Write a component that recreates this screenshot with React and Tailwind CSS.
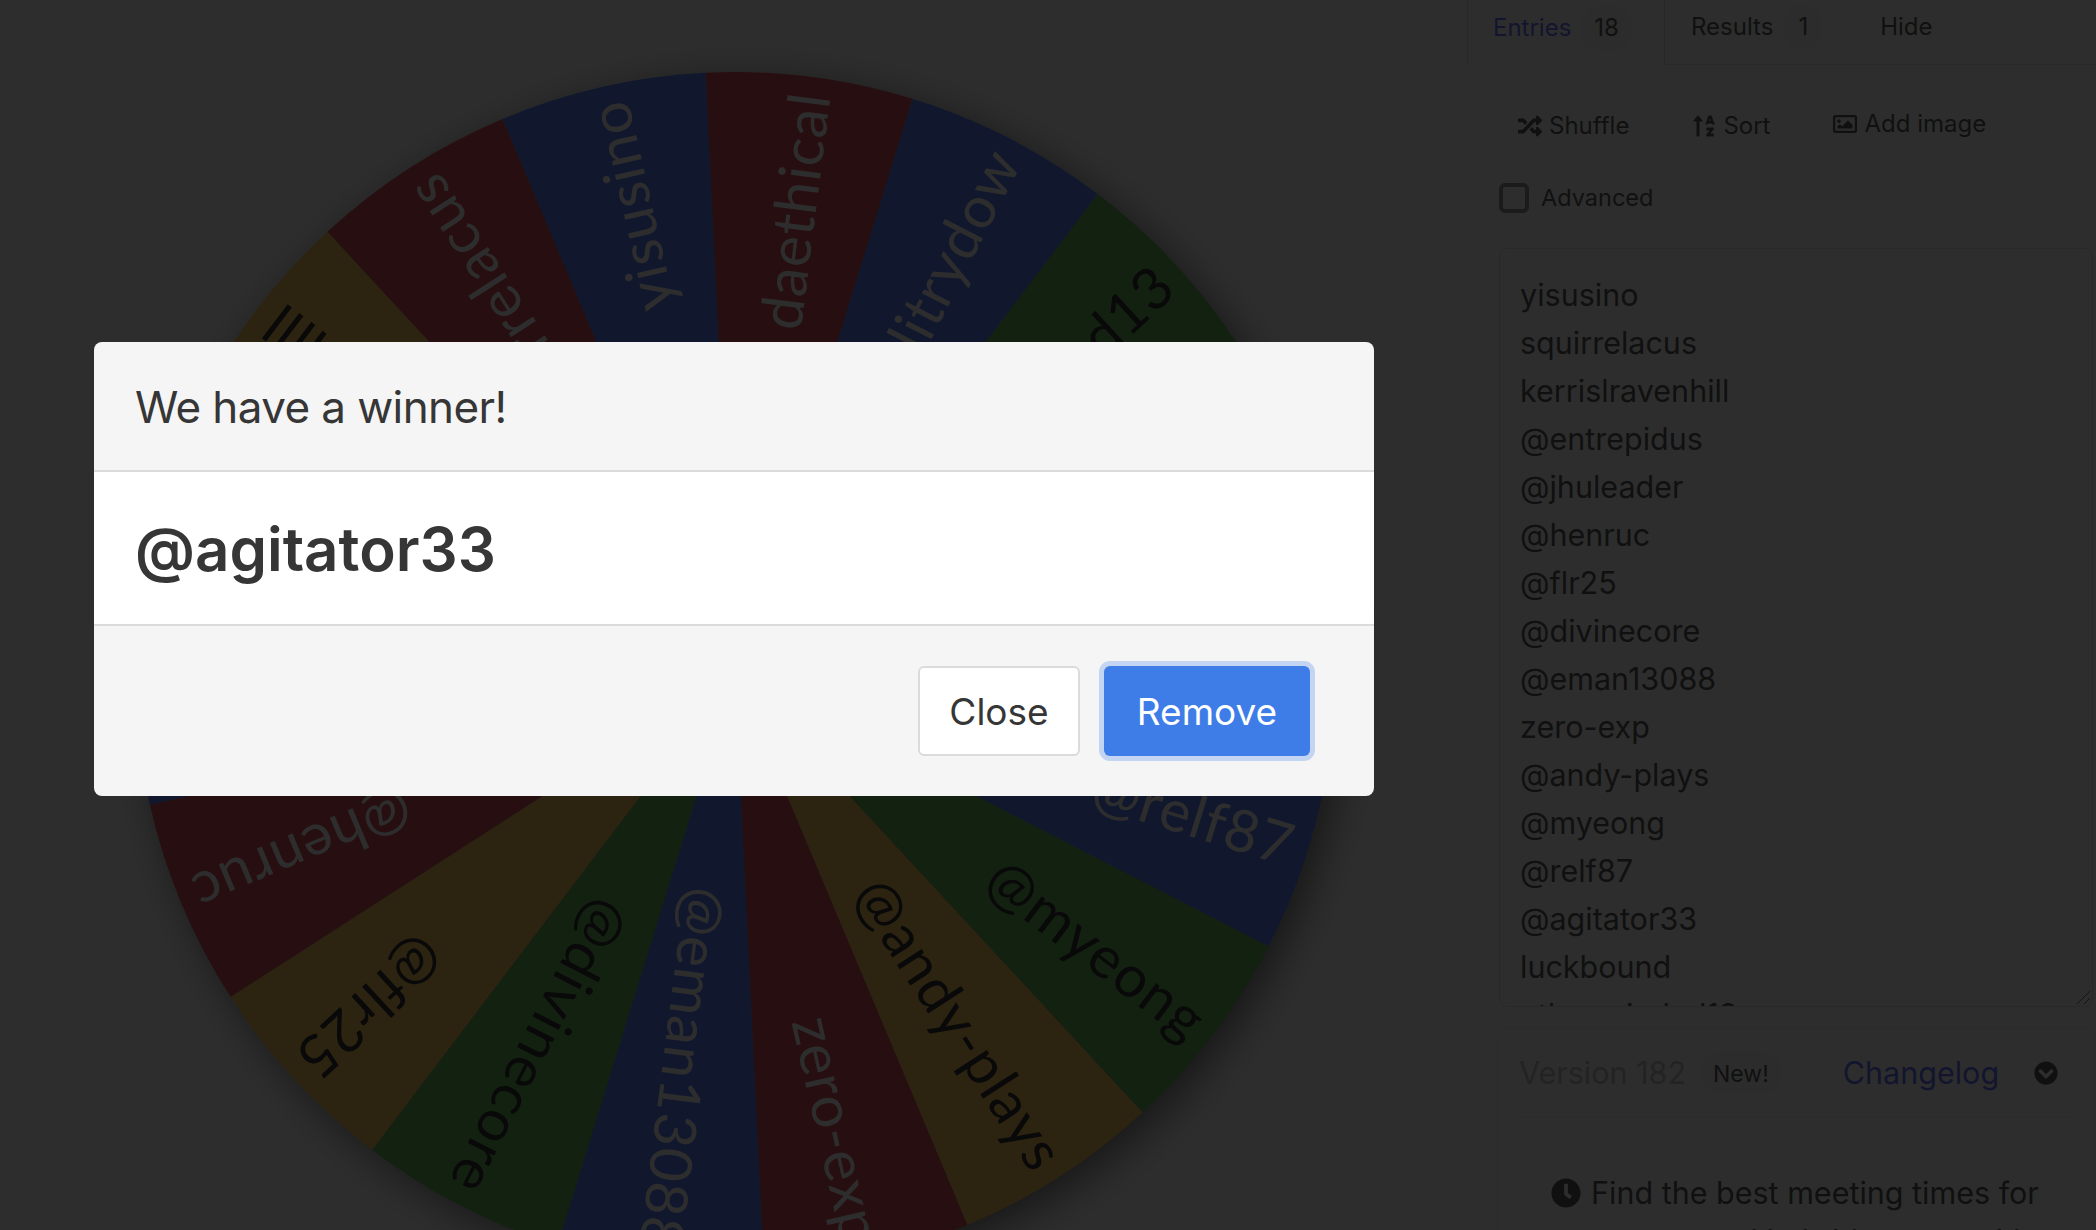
import React from 'react';
import {FaRandom, FaSortAlphaUp, FaRegImage, FaChevronCircleDown, FaClock} from "react-icons/fa";

const font = "font-['Inter',sans-serif]";

const entries = [
    "yisusino", "squirrelacus", "kerrislravenhill", "@entrepidus", "@jhuleader", "@henruc",
    "@flr25", "@divinecore", "@eman13088", "zero-exp", "@andy-plays", "@myeong",
    "@relf87", "@agitator33", "luckbound", "ethanwinded13", "@blitrydow", "daethical",
];
const colors = ["#3c6efd", "#d22735", "#f6bd3c", "#4aa73c"];
const visibleLines = entries.slice(0, 16);

const CX = 600;
const CY = 600;
const R = 600;

const point = deg => {
    const rad = (deg - 90) * Math.PI / 180;
    return [CX + R * Math.cos(rad), CY + R * Math.sin(rad)];
};

const Wheel = () => (
    <svg viewBox="0 0 1200 1200" className="w-[1200px] h-[1200px] shrink-0 overflow-visible drop-shadow-[10px_10px_20px_rgba(0,0,0,0.6)]">
        {entries.map((name, index) => {
            // list runs anticlockwise, first slice sits left of the top
            const start = -22.8 - index * 20;
            const end = start + 20;
            const [x1, y1] = point(start);
            const [x2, y2] = point(end);
            const color = colors[index % 4];
            const dark = index % 4 > 1;
            return (
                <g key={name}>
                    <path d={`M${CX} ${CY}L${x1} ${y1}A${R} ${R} 0 0 1 ${x2} ${y2}Z`} fill={color}/>
                    <text
                        x={CX + R - 16}
                        y={CY}
                        transform={`rotate(${(start + end) / 2 - 90} ${CX} ${CY})`}
                        textAnchor="end"
                        dominantBaseline="central"
                        fontFamily="Lato, sans-serif"
                        fontSize="58"
                        letterSpacing="1"
                        fill={dark ? "#000" : "#fff"}
                    >
                        {name}
                    </text>
                </g>
            );
        })}
    </svg>
);

const App = () => {
    return (
        <div className={`relative h-screen w-full overflow-hidden bg-white text-[#363636] ${font}`}>
            <div className="flex h-full">
                <div className="w-[1467px] shrink-0 pt-[72px] pl-[135px]">
                    <Wheel/>
                </div>
                <div className="flex-1 min-w-0">
                    <div className="flex h-[65px] text-[24px]">
                        <div className="flex h-full w-[198px] items-center border-x border-[#dbdbdb] pl-[25px] pb-[10px]">
                            <span className="text-[#4258ff]">Entries</span>
                            <span className="ml-[9px] rounded-full bg-[#f5f5f5] px-[14px] py-[5px]">18</span>
                        </div>
                        <div className="flex h-full flex-1 items-center border-b border-[#dbdbdb] pl-[26px] pb-[10px]">
                            <span>Results</span>
                            <span className="ml-[11px] rounded-full bg-[#f5f5f5] px-[14px] py-[5px]">1</span>
                            <span className="ml-[58px]">Hide</span>
                        </div>
                    </div>
                    <div className="flex items-center pl-[32px] pt-[35px] text-[24px]">
                        <button className="mr-[25px] flex h-[52px] items-center gap-[7px] rounded-md border border-[#f5f5f5] px-[18px]">
                            <FaRandom className="text-[24px]"/> Shuffle
                        </button>
                        <button className="mr-[19px] flex h-[52px] items-center gap-[7px] rounded-md border border-[#f5f5f5] px-[18px]">
                            <FaSortAlphaUp className="text-[24px]"/> Sort
                        </button>
                        <button className="flex h-[52px] items-center gap-[7px] rounded-md border border-[#f5f5f5] pr-[18px] pl-[24px] pb-[4px]">
                            <FaRegImage className="text-[24px]"/> Add image
                        </button>
                    </div>
                    <label className="mt-[31px] ml-[32px] flex h-[30px] items-center gap-[12px] text-[23.5px]">
                        <span className="h-[30px] w-[30px] rounded-md border-[4px] border-[#808080] bg-white"></span>
                        Advanced
                    </label>
                    <div className="relative mt-[35px] ml-[32px] mr-[3px] h-[759px] overflow-hidden rounded-lg border border-[#dbdbdb] px-[20px] pt-[22px] text-[30.5px] leading-[48px]">
                        {visibleLines.map(line => <div key={line}>{line}</div>)}
                        <svg viewBox="0 0 16 16" className="absolute right-[1px] bottom-[1px] h-[16px] w-[16px]" stroke="#555" fill="none">
                            <path d="M2 15L15 2M9 15L15 9"/>
                        </svg>
                    </div>
                    <div className="mt-[20px] ml-[30px] mr-[1px] h-[400px] rounded-xl border border-[#ededed]">
                        <div className="mx-[21px] flex h-[90px] items-center border-b border-[#f0f0f0] text-[30.5px] whitespace-nowrap">
                            <span className="text-[#b5b5b5]">Version 182</span>
                            <span className="ml-[14px] rounded-full bg-[#f5f5f5] px-[13px] py-[8px] pt-[12px] text-[23px] leading-none">New!</span>
                            <span className="ml-[61px] text-[#4258ff]">Changelog</span>
                            <FaChevronCircleDown className="ml-[35px] shrink-0 text-[24px]"/>
                        </div>
                        <div className="pt-[51px] pl-[53px] text-[30.5px] leading-[48px] whitespace-nowrap">
                            <FaClock className="mr-[10px] inline text-[30px] align-[-4px]"/>
                            Find the best meeting times for<br/>
                            your team and hybrid events with
                        </div>
                    </div>
                </div>
            </div>

            {/* backdrop */}
            <div className="absolute inset-0 bg-[#0a0a0a]/86"></div>

            <div className="absolute left-[94px] top-[342px] w-[1280px] overflow-hidden rounded-lg bg-[#f5f5f5]">
                <div className="flex h-[130px] items-center border-b-2 border-[#dbdbdb] px-[41px] pt-[2px] text-[44px] tracking-[-0.6px]">
                    We have a winner!
                </div>
                <div className="flex h-[152px] items-center bg-white px-[41px] pt-[2px] text-[60px] font-semibold">
                    @agitator33
                </div>
                <div className="flex h-[172px] items-start justify-end gap-6 border-t-2 border-[#dbdbdb] pt-[40px] pr-[64px] text-[37px]">
                    <button className="h-[90px] w-[162px] rounded-md border-2 border-[#dbdbdb] bg-white pt-[2px]">Close</button>
                    <button className="h-[90px] w-[206px] rounded-md bg-[#3e7ce8] pt-[2px] text-white ring-[5px] ring-[#c4d5f3]">Remove</button>
                </div>
            </div>
        </div>
    );
};

export default App;
